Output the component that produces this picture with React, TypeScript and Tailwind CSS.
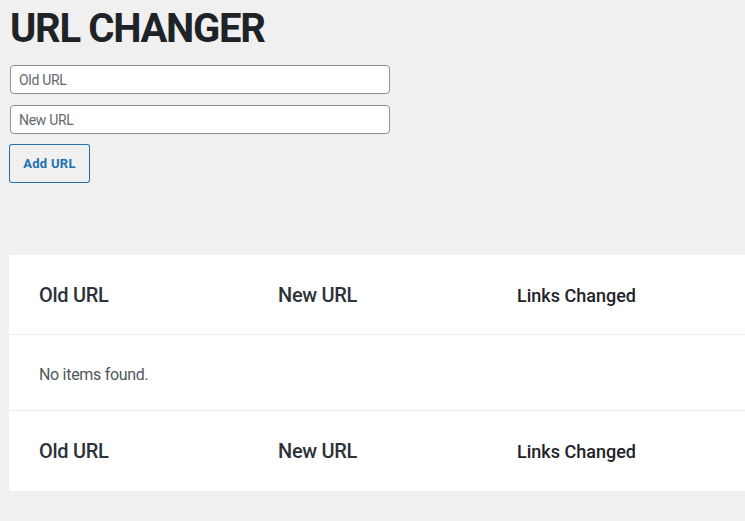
import React from "react";

const font = { fontFamily: "Roboto, 'Noto Sans', sans-serif" };

function Row({ footer }: { footer?: boolean }) {
  return (
    <div className={`grid grid-cols-[239px_239px_239px_239px] h-[80px] items-center ${footer ? "" : "border-b border-[#ececec]"}`}>
      <div className="pl-[30px] text-[20px] font-medium text-[#2c3338] tracking-[-0.3px]">Old URL</div>
      <div className="pl-[30px] text-[20px] font-medium text-[#2c3338] tracking-[-0.3px]">New URL</div>
      <div className="pl-[30px] text-[18px] font-medium text-[#1d2327] pt-[1px]">Links Changed</div>
      <div />
    </div>
  );
}

export default function App() {
  return (
    <div className="w-[745px] h-[521px] bg-[#f0f0f0] overflow-hidden" style={font}>
      <div className="pl-[10px] pt-[6px]">
        <h1 className="text-[40px] leading-[46px] font-bold text-[#1d2327] tracking-[-1.3px]">URL CHANGER</h1>
        <div className="mt-[13px] flex flex-col gap-[11px]">
          <input
            placeholder="Old URL"
            className="w-[380px] h-[29px] rounded-[4px] border border-[#8c8f94] bg-white px-[8px] text-[14px] text-[#2c3338] placeholder:text-[#646970] outline-none tracking-[-0.3px]"
          />
          <input
            placeholder="New URL"
            className="w-[380px] h-[29px] rounded-[4px] border border-[#8c8f94] bg-white px-[8px] text-[14px] text-[#2c3338] placeholder:text-[#646970] outline-none tracking-[-0.3px]"
          />
        </div>
        <div className="mt-[10px] -ml-[1px] w-[81px] h-[39px] rounded-[3px] ring-1 ring-inset ring-[#2271b1] flex items-center justify-center text-[#2271b1] text-[13px] font-bold tracking-[0.3px] cursor-pointer">
          Add URL
        </div>
      </div>
      <div className="mt-[72px] ml-[9px] w-[956px] bg-white">
        <Row />
        <div className="h-[76px] flex items-center pl-[30px] text-[16px] text-[#50575e] border-b border-[#ececec] tracking-[-0.3px] pt-[4px]">
          No items found.
        </div>
        <Row footer />
      </div>
    </div>
  );
}
